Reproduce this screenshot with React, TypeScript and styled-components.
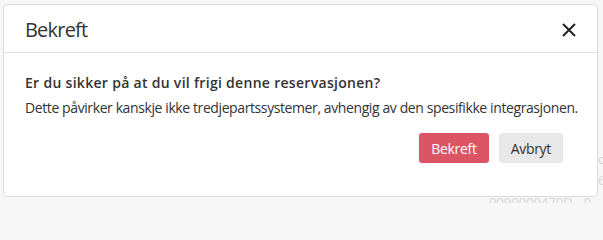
import styled, { createGlobalStyle } from 'styled-components';

const Global = createGlobalStyle`
html, body {
margin: 0;
padding: 0;
background-color: #f7f7f7;
font-family: "Open Sans", "Noto Sans", sans-serif;
color: #212529;
}
`;

const Page = styled.div`
position: relative;
width: 603px;
height: 203px;
box-sizing: border-box;
padding: 4px 5px 6px 3px;
overflow: hidden;
`;

// faded table text of the page beneath the dialog
const Behind = styled.div<{ $top: number; $left: number }>`
position: absolute;
top: ${p => p.$top}px;
left: ${p => p.$left}px;
font-size: 13px;
color: #d4d4d4;
white-space: nowrap;
`;

const Modal = styled.div`
position: relative;
height: 100%;
box-sizing: border-box;
background-color: #fff;
border: 1px solid #dcdcdc;
border-radius: 4px;
display: flex;
flex-direction: column;
`;

const Header = styled.div`
height: 48px;
box-sizing: border-box;
display: flex;
align-items: center;
justify-content: space-between;
padding: 2px 18px 0 21px;
border-bottom: 1px solid #dee2e6;
`;

const Title = styled.h5`
margin: 0;
font-size: 20px;
font-weight: 400;
letter-spacing: -0.8px;
color: #333;
`;

const Close = styled.button`
border: none;
background: none;
padding: 0;
width: 20px;
height: 20px;
display: flex;
align-items: center;
justify-content: center;
cursor: pointer;
`;

const Body = styled.div`
padding: 20px 21px 0 21px;
font-size: 14px;
white-space: nowrap;
`;

const Question = styled.p`
margin: 0 0 6px 0;
font-weight: 600;
letter-spacing: 0.3px;
color: #333;
`;

const Info = styled.p`
margin: 0;
letter-spacing: -0.4px;
color: #333;
`;

const Footer = styled.div`
display: flex;
justify-content: flex-end;
gap: 10px;
padding: 16px 34px 0 0;
`;

const Button = styled.button<{ $variant: 'danger' | 'light' }>`
height: 30px;
padding: 0 12px;
border: none;
border-radius: 3px;
font-family: inherit;
font-size: 14px;
letter-spacing: -0.3px;
background-color: ${p => (p.$variant === 'danger' ? '#dc5565' : '#e8e8e8')};
color: ${p => (p.$variant === 'danger' ? '#fff' : '#333')};
`;

export default function App() {
  return (
    <>
      <Global />
      <Page>
        <Behind $top={150} $left={598}>c</Behind>
        <Behind $top={171} $left={598}>6</Behind>
        <Behind $top={193} $left={489}>0090000470D - 0</Behind>
        <Modal>
          <Header>
            <Title>Bekreft</Title>
            <Close aria-label="Lukk">
              <svg width="14" height="14" viewBox="0 0 14 14">
                <path d="M1 1 L13 13 M13 1 L1 13" stroke="#222" strokeWidth="2" />
              </svg>
            </Close>
          </Header>
          <Body>
            <Question>Er du sikker på at du vil frigi denne reservasjonen?</Question>
            <Info>Dette påvirker kanskje ikke tredjepartssystemer, avhengig av den spesifikke integrasjonen.</Info>
          </Body>
          <Footer>
            <Button $variant="danger">Bekreft</Button>
            <Button $variant="light">Avbryt</Button>
          </Footer>
        </Modal>
      </Page>
    </>
  );
}
